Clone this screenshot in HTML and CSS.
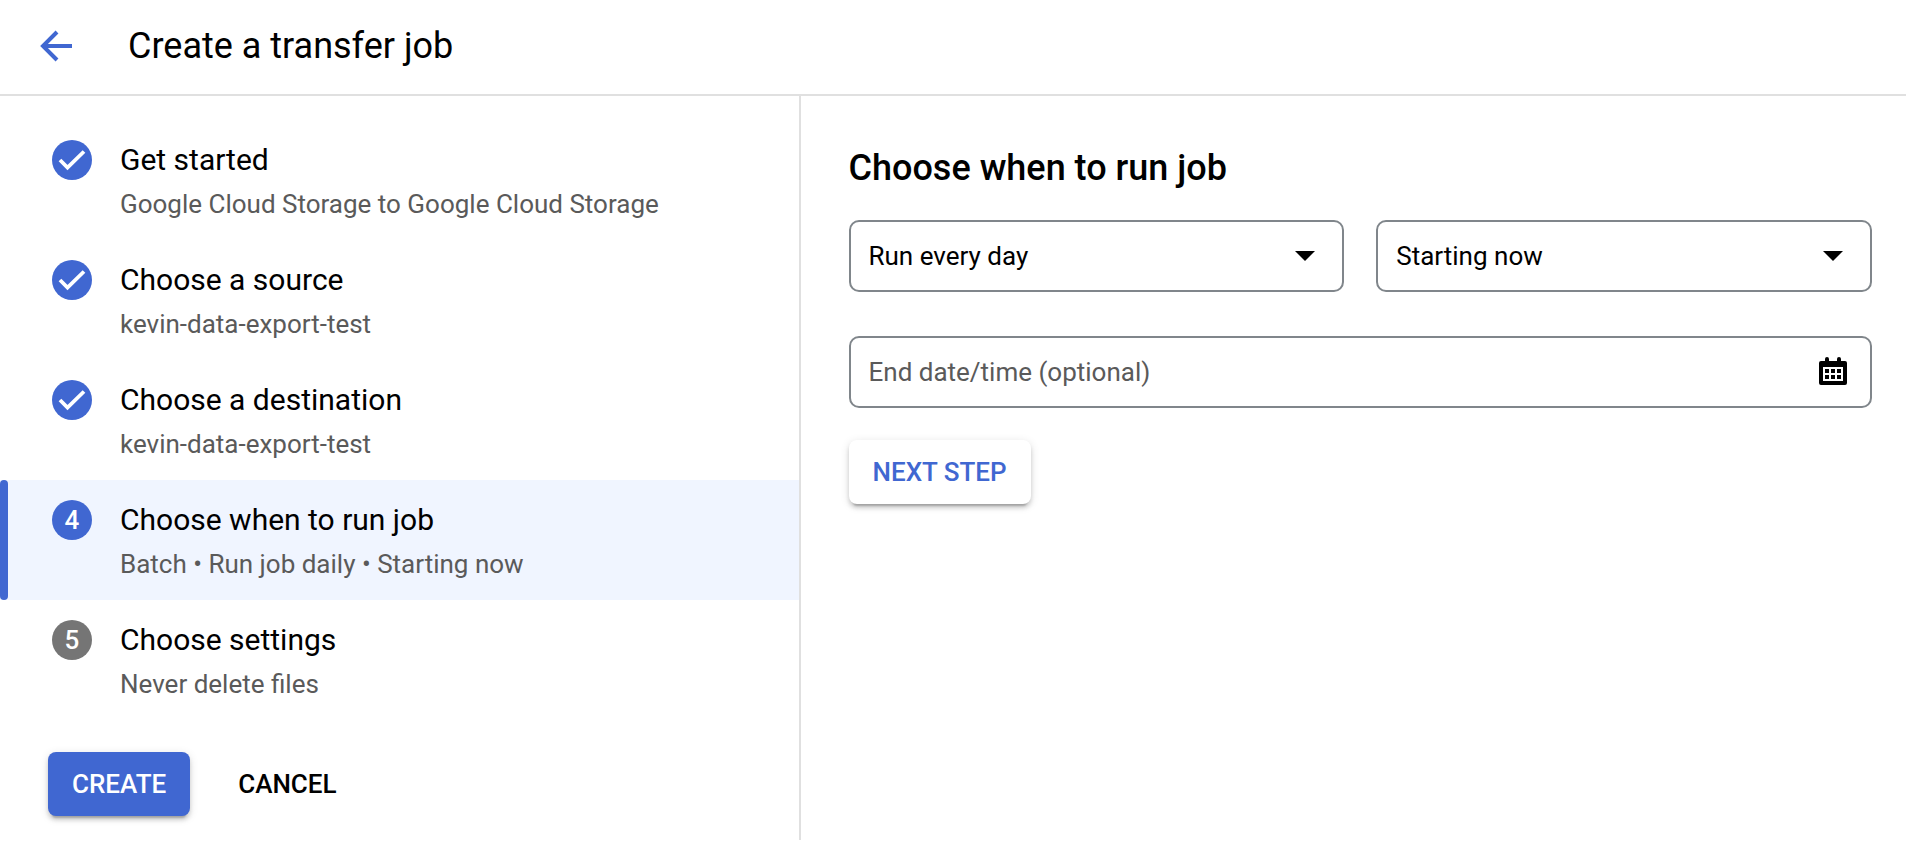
FILE: index.html
```html
<!DOCTYPE html>
<html lang="en">
<head>
<meta charset="utf-8">
<title>Create a transfer job</title>
<link rel="stylesheet" href="styles.css">
</head>
<body>
<header class="topbar">
  <a class="back" href="#" aria-label="Back">
    <svg width="32" height="32" viewBox="0 0 32 32" aria-hidden="true"><path d="M32 16H3M17 2L3 16l14 14" fill="none" stroke="currentColor" stroke-width="4"/></svg>
  </a>
  <h1 class="page-title">Create a transfer job</h1>
</header>
<main class="layout">
  <section class="sidebar">
    <ol class="steps">
      <li class="step">
        <span class="badge"><svg width="40" height="40" viewBox="0 0 40 40" aria-hidden="true"><path d="M8 20l7.500 7.500L32 11.500" fill="none" stroke="#fff" stroke-width="3.800"/></svg></span>
        <div class="step-text"><h2 class="step-title">Get started</h2><p class="step-note">Google Cloud Storage to Google Cloud Storage</p></div>
      </li>
      <li class="step">
        <span class="badge"><svg width="40" height="40" viewBox="0 0 40 40" aria-hidden="true"><path d="M8 20l7.500 7.500L32 11.500" fill="none" stroke="#fff" stroke-width="3.800"/></svg></span>
        <div class="step-text"><h2 class="step-title">Choose a source</h2><p class="step-note">kevin-data-export-test</p></div>
      </li>
      <li class="step">
        <span class="badge"><svg width="40" height="40" viewBox="0 0 40 40" aria-hidden="true"><path d="M8 20l7.500 7.500L32 11.500" fill="none" stroke="#fff" stroke-width="3.800"/></svg></span>
        <div class="step-text"><h2 class="step-title">Choose a destination</h2><p class="step-note">kevin-data-export-test</p></div>
      </li>
      <li class="step step-current" aria-current="step">
        <span class="badge">4</span>
        <div class="step-text"><h2 class="step-title">Choose when to run job</h2><p class="step-note">Batch • Run job daily • Starting now</p></div>
      </li>
      <li class="step">
        <span class="badge badge-pending">5</span>
        <div class="step-text"><h2 class="step-title">Choose settings</h2><p class="step-note">Never delete files</p></div>
      </li>
    </ol>
    <div class="actions">
      <button class="btn btn-primary" type="button">CREATE</button>
      <button class="btn btn-text" type="button">CANCEL</button>
    </div>
  </section>
  <form class="panel">
    <h2 class="panel-title">Choose when to run job</h2>
    <div class="row">
      <div class="field">
        <select class="control" aria-label="Frequency"><option>Run every day</option></select>
        <svg class="field-icon caret" width="20" height="10" viewBox="0 0 20 10" aria-hidden="true"><path d="M0 0h20L10 10z"/></svg>
      </div>
      <div class="field">
        <select class="control" aria-label="Start"><option>Starting now</option></select>
        <svg class="field-icon caret" width="20" height="10" viewBox="0 0 20 10" aria-hidden="true"><path d="M0 0h20L10 10z"/></svg>
      </div>
    </div>
    <div class="field">
      <input class="control" type="text" aria-label="End date/time (optional)" placeholder="End date/time (optional)">
      <svg class="field-icon calendar" width="28" height="28" viewBox="0 0 28 28" aria-hidden="true"><path fill-rule="evenodd" d="M2 4h4V2a2 2 0 0 1 4 0v2h8V2a2 2 0 0 1 4 0v2h4a2 2 0 0 1 2 2v20a2 2 0 0 1-2 2H2a2 2 0 0 1-2-2V6a2 2 0 0 1 2-2zM4 10v14h20V10z"/><path d="M6 12h4v4H6zm6 0h4v4h-4zm6 0h4v4h-4zM6 18h4v4H6zm6 0h4v4h-4zm6 0h4v4h-4z"/></svg>
    </div>
    <button class="btn btn-raised" type="button">NEXT STEP</button>
  </form>
</main>
</body>
</html>
```
FILE: styles.css
```css
* { box-sizing: border-box; }
body {
  margin: 0;
  min-height: 100vh;
  display: flex;
  flex-direction: column;
  background: #fff;
  color: #000;
  font-family: Roboto, "Liberation Sans", sans-serif;
  font-size: 26px;
}
h1, h2, p, ol { margin: 0; padding: 0; }
.topbar {
  display: flex;
  align-items: center;
  gap: 56px;
  padding: 22px 40px 24px;
  border-bottom: 2px solid #e0e0e0;
}
.back { display: flex; color: #4067d1; }
.page-title { font-size: 36px; font-weight: 400; line-height: 48px; }
.layout { flex: 1; display: flex; margin-bottom: 10px; }
.sidebar { flex: 0 0 42%; border-right: 2px solid #e0e0e0; padding-top: 24px; }
.steps { list-style: none; }
.step { display: flex; gap: 28px; padding: 20px 24px 16px 52px; }
.step-current {
  position: relative;
  background: #f0f5ff;
}
.step-current::before {
  content: "";
  position: absolute;
  left: 0;
  top: 0;
  bottom: 0;
  width: 8px;
  border-radius: 4px;
  background: #4067d1;
}
.badge {
  display: flex;
  align-items: center;
  justify-content: center;
  width: 40px;
  height: 40px;
  border-radius: 50%;
  background: #4067d1;
  color: #fff;
  font-weight: 500;
}
.badge-pending { background: #757575; }
.step-title { font-size: 30px; font-weight: 400; line-height: 40px; }
.step-note { margin-top: 4px; line-height: 40px; color: #5a5a5a; }
.actions { display: flex; gap: 24px; padding: 32px 48px 0; }
.btn {
  height: 64px;
  padding: 0 24px;
  border: 0;
  border-radius: 8px;
  background: #fff;
  font: 500 26px Roboto, "Liberation Sans", sans-serif;
}
.btn-primary, .btn-raised {
  box-shadow: 0 6px 2px -4px rgba(0, 0, 0, .2), 0 4px 4px rgba(0, 0, 0, .14), 0 2px 10px rgba(0, 0, 0, .12);
}
.btn-primary { background: #4067d1; color: #fff; }
.btn-raised { align-self: flex-start; color: #4067d1; }
.btn-text { color: #000; }
.panel { flex: 1; display: flex; flex-direction: column; padding: 48px 34px 0 48px; }
.panel-title { margin-bottom: 28px; font-size: 36px; font-weight: 500; line-height: 48px; }
.row { display: grid; grid-template-columns: 1fr 1fr; gap: 32px; margin-bottom: 44px; }
.field { position: relative; display: flex; }
.field + .btn { margin-top: 32px; }
.control {
  width: 100%;
  height: 72px;
  padding: 0 80px 0 18px;
  border: 2px solid #80868b;
  border-radius: 10px;
  background: #fff;
  color: #000;
  font: 400 26px Roboto, "Liberation Sans", sans-serif;
  appearance: none;
}
.control::placeholder { color: #5a5a5a; opacity: 1; }
.field-icon { position: absolute; pointer-events: none; }
.calendar { right: 25px; top: 21px; }
.caret { right: 29px; top: 31px; }
```
